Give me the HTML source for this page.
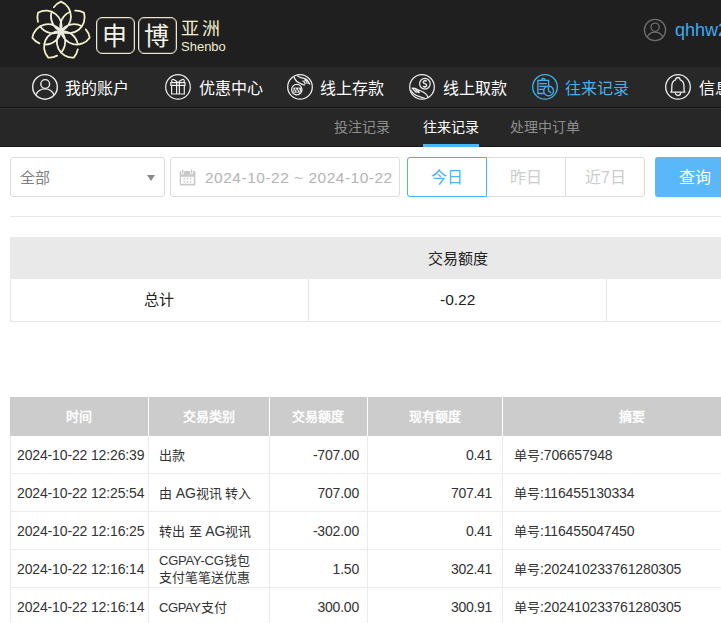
<!DOCTYPE html>
<html lang="zh-CN">
<head>
<meta charset="utf-8">
<style>
*{box-sizing:border-box;margin:0;padding:0}
html,body{width:721px;height:623px;overflow:hidden;background:#fff}
body{font-family:"Liberation Sans",sans-serif;position:relative;color:#333}
.abs{position:absolute}
#hdr{left:0;top:0;width:721px;height:67px;background:#1f1f1f}
#nav{left:0;top:67px;width:721px;height:40px;background:#282828}
#navline1{left:0;top:107px;width:721px;height:1px;background:#121212}
#navline2{left:0;top:108px;width:721px;height:1px;background:#333}
#sub{left:0;top:109px;width:721px;height:37px;background:#272727}
#subline{left:0;top:146px;width:721px;height:1px;background:#181818}
.navtxt{font-size:16px;color:#fff;white-space:nowrap;line-height:20px;font-weight:500}
.subtxt{font-size:14px;color:#8e8e8e;white-space:nowrap;line-height:18px}
.box{border:1px solid #ddd;border-radius:3px;background:#fff}
.cell{position:absolute;white-space:nowrap}
.th{position:absolute;top:408px;height:18px;line-height:18px;text-align:center;font-size:13px;font-weight:bold;color:#fff;white-space:nowrap}
.td{position:absolute;font-size:14px;line-height:18px;color:#333;white-space:nowrap}
.td.r{text-align:right}
.c{font-size:13px;letter-spacing:0}
</style>
</head>
<body>
<div id="hdr" class="abs"></div>
<div id="nav" class="abs"></div>
<div id="navline1" class="abs"></div>
<div id="navline2" class="abs"></div>
<div id="sub" class="abs"></div>
<div id="subline" class="abs"></div>


<!-- flower logo -->
<svg class="abs" style="left:0;top:0" width="100" height="67"><defs><radialGradient id="fg" gradientUnits="userSpaceOnUse" cx="61" cy="31.1" r="30"><stop offset="0" stop-color="#e6e6e0"/><stop offset="0.35" stop-color="#f0eed8"/><stop offset="1" stop-color="#f3efc4"/></radialGradient></defs><path d="M61.00,31.10A15.8,15.8 0 0 0 61.00,1.70M61.00,31.10A15.8,15.8 0 0 1 51.69,11.76M53.86,7.32A15.8,15.8 0 0 1 61.00,1.70M61.00,31.10A15.8,15.8 0 0 0 83.99,12.77M61.00,31.10A15.8,15.8 0 0 1 70.31,11.76M75.14,10.69A15.8,15.8 0 0 1 83.99,12.77M61.00,31.10A15.8,15.8 0 0 0 89.66,37.64M61.00,31.10A15.8,15.8 0 0 1 81.92,26.32M85.77,29.43A15.8,15.8 0 0 1 89.66,37.64M61.00,31.10A15.8,15.8 0 0 0 73.76,57.59M61.00,31.10A15.8,15.8 0 0 1 77.78,44.48M77.75,49.42A15.8,15.8 0 0 1 73.76,57.59M61.00,31.10A15.8,15.8 0 0 0 48.24,57.59M61.00,31.10A15.8,15.8 0 0 1 61.00,52.56M57.12,55.62A15.8,15.8 0 0 1 48.24,57.59M61.00,31.10A15.8,15.8 0 0 0 32.34,37.64M61.00,31.10A15.8,15.8 0 0 1 44.22,44.48M39.41,43.35A15.8,15.8 0 0 1 32.34,37.64M61.00,31.10A15.8,15.8 0 0 0 38.01,12.77M61.00,31.10A15.8,15.8 0 0 1 40.08,26.32M37.96,21.86A15.8,15.8 0 0 1 38.01,12.77" fill="none" stroke="url(#fg)" stroke-width="1.8" stroke-linecap="round"/></svg>
<!-- user top-right -->
<svg class="abs" style="left:640px;top:15px" width="30" height="30" viewBox="0 0 30 30" fill="none" stroke="#6d6d6d" stroke-width="1.3">
<circle cx="15" cy="15" r="10.6"/><circle cx="15.1" cy="12.2" r="4.1"/><path d="M7.2,22.2 A8.6,8.6 0 0 1 22.8,22.2"/></svg>
<!-- nav icons -->
<svg class="abs" style="left:30px;top:72px" width="30" height="30" viewBox="0 0 30 30" fill="none" stroke="#eeeeee" stroke-width="1.4">
<circle cx="15" cy="14.9" r="12.3"/><circle cx="15.2" cy="12" r="4.4"/><path d="M5.8,23.1 A9.85,9.85 0 0 1 24.1,23.1"/></svg>
<svg class="abs" style="left:163px;top:72px" width="30" height="30" viewBox="0 0 30 30" fill="none" stroke="#eeeeee" stroke-width="1.2">
<circle cx="15" cy="14.9" r="12.3"/>
<rect x="7.8" y="10.6" width="14.2" height="2.8"/><path d="M8.6,13.4 V22 H21.3 V13.4"/><path d="M13.6,10.6 V22 M16.4,10.6 V22"/>
<path d="M14.4,10.2 C12,8.2 10.5,6.5 9.2,7.6 C8.2,8.5 8.7,9.6 9.2,10.2 M15.6,10.2 C18,8.2 19.5,6.5 20.8,7.6 C21.8,8.5 21.3,9.6 20.8,10.2"/></svg>
<svg class="abs" style="left:286px;top:72px" width="30" height="30" viewBox="0 0 30 30" fill="none" stroke="#eeeeee" stroke-width="1.25">
<circle cx="14" cy="14.9" r="12.3"/><circle cx="10.8" cy="17.6" r="5.2"/>
<rect x="7.4" y="15.6" width="7.8" height="5" fill="#eeeeee" stroke="none"/><path d="M8.2,20.2 L9.6,16.4 L11.2,20.2 L12.7,16.4 L14.3,20.2" stroke="#282828" stroke-width="0.75"/>
<path d="M7.9,4.5 C8.8,7.5 10.8,10 13.2,10.8 C15,11.5 17,12.4 18.8,13.3 M11.1,3.4 C12.5,5 14.5,5.8 18.2,6.4 C20.6,7 22.6,9.6 23.8,12.6 M16.4,9.2 C17.4,8.6 18.4,9.6 19.4,12.2 M18.4,8.4 C19.4,7.8 20.6,9.2 21.4,11.8 M20.4,8.2 C21.4,8 22.4,9.4 22.8,11.6"/></svg>
<svg class="abs" style="left:408px;top:72px" width="30" height="30" viewBox="0 0 30 30" fill="none" stroke="#eeeeee" stroke-width="1.25">
<circle cx="14" cy="14.9" r="12.3"/><circle cx="16.9" cy="11.7" r="5.3"/>
<path d="M18.6,9.4 C18.2,8.4 15.2,8.4 15.2,10.2 C15.2,12 18.7,11.4 18.7,13.3 C18.7,15.1 15.6,15.1 15.1,14" stroke-width="1.4"/><path d="M16.9,7.8 V8.6 M16.9,15 V15.8" stroke-width="1.2"/>
<path d="M3.6,16.4 C5,16 7,16.2 9.5,17.5 L13,19 C16,20.2 18.6,21.5 20.2,25.5 M3,18.2 C4.5,21 6.5,23 10,24.2 C12.5,25 15,25.2 17,26.6 M4.8,16.8 L8.6,20.8 M7.2,16.8 L10.8,21 M9.8,18.4 L11.6,20.8"/></svg>
<svg class="abs" style="left:530px;top:72px" width="30" height="30" viewBox="0 0 30 30" fill="none" stroke="#48b0ee" stroke-width="1.3">
<circle cx="15" cy="14.9" r="12.3"/>
<path d="M13.8,21.5 H7.9 V8.4 H18.6 V13.6"/><path d="M11.6,8.2 A1.7,1.7 0 0 1 15,8.2"/>
<path d="M9.3,11.6 H16.8 M9.3,14.4 H15.8 M9.3,17.3 H13.6"/>
<circle cx="18.6" cy="18.9" r="4.9"/><path d="M18.4,15 L18.6,19 L21.2,21"/></svg>
<svg class="abs" style="left:663px;top:72px" width="30" height="30" viewBox="0 0 30 30" fill="none" stroke="#eeeeee" stroke-width="1.3">
<circle cx="15" cy="14.9" r="12.3"/>
<path d="M7.9,20.2 L8.7,18.6 L8.9,13.2 C9,10.6 10.4,8.8 12.5,7.9 C12.8,6.3 13.8,5.5 14.9,5.5 C16,5.5 17,6.3 17.3,7.9 C19.4,8.8 20.8,10.6 20.9,13.2 L21.1,18.6 L21.9,20.2 Z" stroke-linejoin="round"/>
<path d="M12.3,20.6 A2.7,2.9 0 0 0 17.7,20.6"/></svg>
<!-- logo boxes -->
<div class="abs" style="left:96px;top:17px;width:39px;height:37px;border:1px solid #ebe7cf;border-radius:6px;box-shadow:inset 0 0 0 0.6px rgba(235,231,207,0.45)"></div>
<div class="abs" style="left:138px;top:17px;width:39px;height:37px;border:1px solid #ebe7cf;border-radius:6px;box-shadow:inset 0 0 0 0.6px rgba(235,231,207,0.45)"></div>
<div class="abs navtxt" style="left:102px;top:23px;font-size:25px;line-height:26px;font-weight:400;color:#f4f2e4">申</div>
<div class="abs navtxt" style="left:144px;top:23px;font-size:25px;line-height:26px;font-weight:400;color:#f4f2e4">博</div>
<div class="abs navtxt" style="left:181px;top:19px;font-size:18px;line-height:20px;letter-spacing:3px;color:#f1edcf">亚洲</div>
<div class="abs navtxt" style="left:181px;top:40px;font-size:13px;line-height:14px;font-weight:400;color:#f1edcf">Shenbo</div>

<!-- nav texts -->
<div class="abs navtxt" style="left:65px;top:78.6px">我的账户</div>
<div class="abs navtxt" style="left:199px;top:78.6px">优惠中心</div>
<div class="abs navtxt" style="left:320px;top:78.6px">线上存款</div>
<div class="abs navtxt" style="left:443px;top:78.6px">线上取款</div>
<div class="abs navtxt" style="left:565px;top:78.6px;color:#48b0ee">往来记录</div>
<div class="abs navtxt" style="left:699px;top:78.6px">信息</div>

<!-- user -->
<div class="abs navtxt" style="left:675px;top:19px;font-size:18px;line-height:22px;color:#40aaf0">qhhw2</div>

<!-- subnav -->
<div class="abs subtxt" style="left:334px;top:118px">投注记录</div>
<div class="abs subtxt" style="left:423px;top:118px;color:#fff">往来记录</div>
<div class="abs subtxt" style="left:510px;top:118px">处理中订单</div>
<div class="abs" style="left:423px;top:144px;width:56px;height:3px;background:#4bb6f5"></div>

<!-- filters -->
<div class="abs box" style="left:10px;top:157px;width:155px;height:40px"></div>
<div class="abs" style="left:20px;top:169px;font-size:15px;line-height:18px;color:#808080">全部</div>
<div class="abs" style="left:147px;top:175px;width:0;height:0;border-left:4px solid transparent;border-right:4px solid transparent;border-top:6px solid #8a8a8a"></div>
<div class="abs box" style="left:170px;top:157px;width:230px;height:40px"></div>
<svg class="abs" style="left:177px;top:167px" width="22" height="21" viewBox="0 0 22 21">
<rect x="2.7" y="4" width="15.7" height="14.4" rx="1.2" fill="#c9c9c9"/>
<rect x="4" y="9.8" width="12.8" height="7" fill="#fff"/>
<rect x="6.4" y="10.9" width="1.6" height="1.6" fill="#d0d0d0"/><rect x="9.7" y="10.9" width="1.6" height="1.6" fill="#d0d0d0"/><rect x="12.9" y="10.9" width="1.6" height="1.6" fill="#d0d0d0"/>
<rect x="6.4" y="14.2" width="1.6" height="1.6" fill="#d0d0d0"/><rect x="9.7" y="14.2" width="1.6" height="1.6" fill="#d0d0d0"/><rect x="12.9" y="14.2" width="1.6" height="1.6" fill="#d0d0d0"/>
<rect x="4.2" y="2.2" width="3" height="5" rx="1.2" fill="#fff"/><rect x="13" y="2.2" width="3" height="5" rx="1.2" fill="#fff"/>
<rect x="5" y="2.4" width="1.4" height="4.2" rx="0.7" fill="#c9c9c9"/><rect x="13.8" y="2.4" width="1.4" height="4.2" rx="0.7" fill="#c9c9c9"/>
</svg>
<div class="abs" style="left:205px;top:169px;font-size:15.5px;line-height:18px;letter-spacing:0.5px;color:#b4b4b4;white-space:nowrap">2024-10-22 ~ 2024-10-22</div>
<div class="abs box" style="left:407px;top:157px;width:238px;height:40px"></div>
<div class="abs" style="left:486px;top:158px;width:1px;height:38px;background:#ddd"></div>
<div class="abs" style="left:565px;top:158px;width:1px;height:38px;background:#ddd"></div>
<div class="abs" style="left:407px;top:157px;width:80px;height:40px;border:1px solid #4db3f5;border-radius:3px 0 0 3px"></div>
<div class="abs" style="left:431px;top:169px;font-size:16px;line-height:18px;color:#4db3f5">今日</div>
<div class="abs" style="left:510px;top:169px;font-size:16px;line-height:18px;color:#ccc">昨日</div>
<div class="abs" style="left:585px;top:169px;font-size:16px;line-height:18px;color:#ccc">近7日</div>
<div class="abs" style="left:655px;top:157px;width:80px;height:40px;background:#5bb8f8;border-radius:3px"></div>
<div class="abs" style="left:679px;top:169px;font-size:16px;line-height:18px;color:#fff">查询</div>
<div class="abs" style="left:10px;top:216px;width:711px;height:1px;background:#e8e8e8"></div>

<!-- summary table -->
<div class="abs" style="left:10px;top:237px;width:711px;height:42px;background:#e9e9e9"></div>
<div class="abs" style="left:10px;top:279px;width:760px;height:43px;border:1px solid #e5e5e5;border-top:0"></div>
<div class="abs" style="left:308px;top:279px;width:1px;height:42px;background:#e5e5e5"></div>
<div class="abs" style="left:606px;top:279px;width:1px;height:42px;background:#e5e5e5"></div>
<div class="abs" style="left:428px;top:250px;font-size:15px;line-height:18px;color:#222">交易额度</div>
<div class="abs" style="left:144px;top:291px;font-size:15px;line-height:18px;color:#222">总计</div>
<div class="abs" style="left:440px;top:291px;font-size:15.5px;line-height:18px;color:#222">-0.22</div>

<!-- main table -->
<div class="abs" style="left:10px;top:397px;width:711px;height:39px;background:#ccc"></div>
<div class="abs" style="left:148px;top:397px;width:1px;height:39px;background:#fff"></div>
<div class="abs" style="left:269px;top:397px;width:1px;height:39px;background:#fff"></div>
<div class="abs" style="left:367px;top:397px;width:1px;height:39px;background:#fff"></div>
<div class="abs" style="left:502px;top:397px;width:1px;height:39px;background:#fff"></div>
<div class="th" style="left:10px;width:138px">时间</div>
<div class="th" style="left:148px;width:121px">交易类别</div>
<div class="th" style="left:269px;width:98px">交易额度</div>
<div class="th" style="left:367px;width:135px">现有额度</div>
<div class="th" style="left:502px;width:259px">摘要</div>
<div class="abs" style="left:10px;top:436px;width:1px;height:187px;background:#ececec"></div>
<div class="abs" style="left:148px;top:436px;width:1px;height:187px;background:#ececec"></div>
<div class="abs" style="left:269px;top:436px;width:1px;height:187px;background:#ececec"></div>
<div class="abs" style="left:367px;top:436px;width:1px;height:187px;background:#ececec"></div>
<div class="abs" style="left:502px;top:436px;width:1px;height:187px;background:#ececec"></div>
<div class="abs" style="left:10px;top:473px;width:711px;height:1px;background:#ececec"></div>
<div class="td" style="left:17px;top:446px;letter-spacing:-0.14px">2024-10-22 12:26:39</div>
<div class="td" style="left:159px;top:446px"><span class="c">出款</span></div>
<div class="td r" style="right:362px;top:446px;letter-spacing:-0.2px">-707.00</div>
<div class="td r" style="right:229px;top:446px;letter-spacing:-0.3px">0.41</div>
<div class="td" style="left:514px;top:446px;letter-spacing:-0.15px"><span class="c">单号</span>:706657948</div>
<div class="abs" style="left:10px;top:511px;width:711px;height:1px;background:#ececec"></div>
<div class="td" style="left:17px;top:484px;letter-spacing:-0.14px">2024-10-22 12:25:54</div>
<div class="td" style="left:159px;top:484px"><span class="c">由 </span>AG<span class="c">视讯 转入</span></div>
<div class="td r" style="right:362px;top:484px;letter-spacing:-0.2px">707.00</div>
<div class="td r" style="right:229px;top:484px;letter-spacing:-0.3px">707.41</div>
<div class="td" style="left:514px;top:484px;letter-spacing:-0.15px"><span class="c">单号</span>:116455130334</div>
<div class="abs" style="left:10px;top:549px;width:711px;height:1px;background:#ececec"></div>
<div class="td" style="left:17px;top:522px;letter-spacing:-0.14px">2024-10-22 12:16:25</div>
<div class="td" style="left:159px;top:522px"><span class="c">转出 至 </span>AG<span class="c">视讯</span></div>
<div class="td r" style="right:362px;top:522px;letter-spacing:-0.2px">-302.00</div>
<div class="td r" style="right:229px;top:522px;letter-spacing:-0.3px">0.41</div>
<div class="td" style="left:514px;top:522px;letter-spacing:-0.15px"><span class="c">单号</span>:116455047450</div>
<div class="abs" style="left:10px;top:587px;width:711px;height:1px;background:#ececec"></div>
<div class="td" style="left:17px;top:560px;letter-spacing:-0.14px">2024-10-22 12:16:14</div>
<div class="td" style="left:159px;top:552px;line-height:16px"><span class="c" style="letter-spacing:-0.2px">CGPAY-CG</span><span class="c">钱包</span><br><span class="c">支付笔笔送优惠</span></div>
<div class="td r" style="right:362px;top:560px;letter-spacing:-0.2px">1.50</div>
<div class="td r" style="right:229px;top:560px;letter-spacing:-0.3px">302.41</div>
<div class="td" style="left:514px;top:560px;letter-spacing:-0.15px"><span class="c">单号</span>:202410233761280305</div>
<div class="abs" style="left:10px;top:625px;width:711px;height:1px;background:#ececec"></div>
<div class="td" style="left:17px;top:598px;letter-spacing:-0.14px">2024-10-22 12:16:14</div>
<div class="td" style="left:159px;top:598px"><span class="c" style="letter-spacing:-0.4px">CGPAY</span><span class="c">支付</span></div>
<div class="td r" style="right:362px;top:598px;letter-spacing:-0.2px">300.00</div>
<div class="td r" style="right:229px;top:598px;letter-spacing:-0.3px">300.91</div>
<div class="td" style="left:514px;top:598px;letter-spacing:-0.15px"><span class="c">单号</span>:202410233761280305</div>
</body>
</html>
